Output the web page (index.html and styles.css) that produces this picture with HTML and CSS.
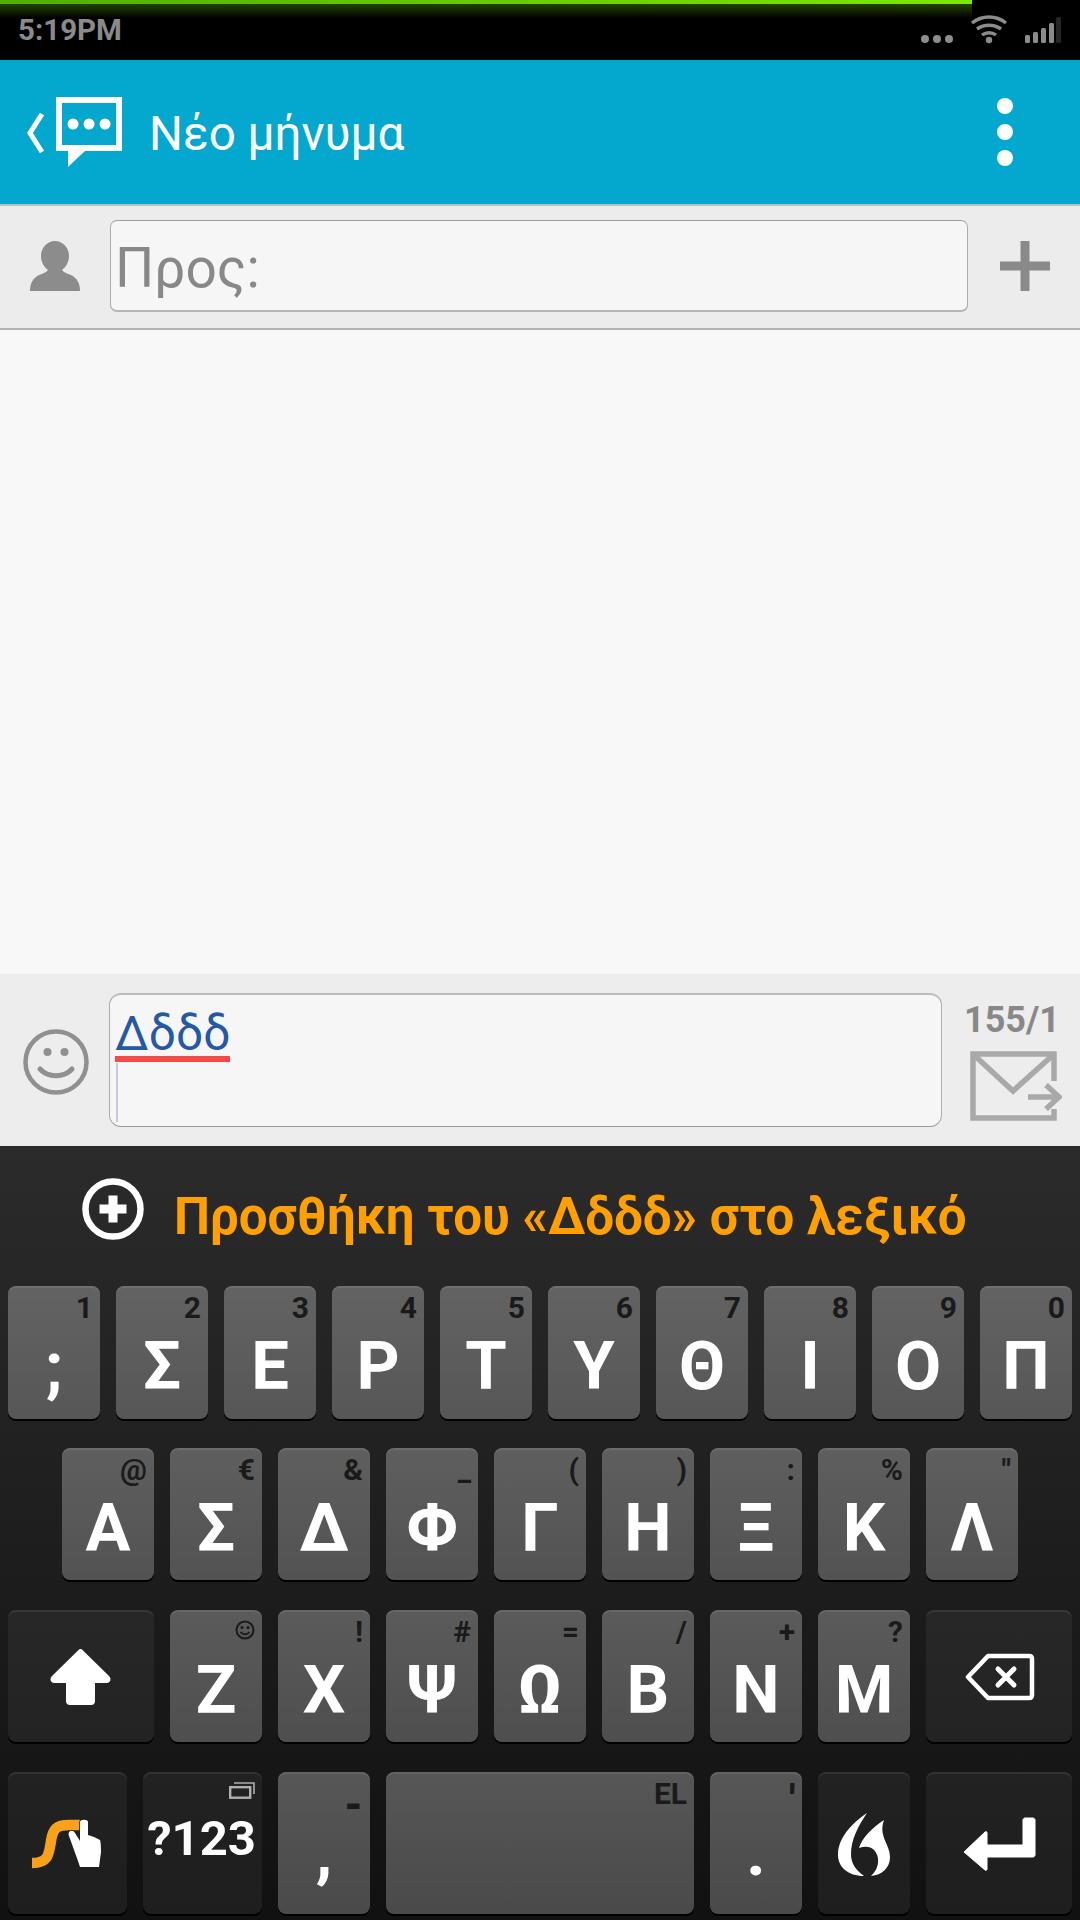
FILE: index.html
```html
<!DOCTYPE html>
<html>
<head>
	<meta charset="utf-8">
	<title>Νέο μήνυμα</title>
	<link rel="stylesheet" href="styles.css">
</head>
<body>
	<div class="pantalla">
		<div class="status">
			<div class="carga"></div>
			<span class="hora">5:19PM</span>
			<svg class="status_iconos" width="150" height="60" viewBox="0 0 150 60">
				<g fill="#8c8c8c">
					<circle cx="5" cy="39" r="4"/><circle cx="17" cy="39" r="4"/><circle cx="29" cy="39" r="4"/>
					<circle cx="69" cy="40" r="3.2"/>
				</g>
				<g fill="none" stroke="#8c8c8c" stroke-width="3.4">
					<path d="M52 23c10-8 24-8 34 0"/><path d="M57 29c7-5 17-5 24 0"/><path d="M62 35c4-3 10-3 14 0"/>
				</g>
				<g fill="#8c8c8c">
					<rect x="105" y="35" width="5" height="8" rx="1.5"/><rect x="113" y="32" width="5" height="11" rx="1.5"/><rect x="121" y="28" width="5" height="15" rx="1.5"/><rect x="129" y="23" width="5" height="20" rx="1.5"/>
					<rect x="136" y="17" width="5" height="26" rx="1.5" fill="#262626"/>
				</g>
			</svg>
		</div>

		<div class="appbar">
			<svg width="95" height="70" viewBox="0 0 95 70">
				<path d="M15 17L3 36l12 19" fill="none" stroke="#fff" stroke-width="5"/>
				<path d="M29 0h66v54H58L41 70V54H29z" fill="#fff"/>
				<rect x="35" y="6" width="54" height="42" fill="#04a7cd"/>
				<circle cx="46" cy="27" r="5.5" fill="#fff"/><circle cx="62" cy="27" r="5.5" fill="#fff"/><circle cx="78" cy="27" r="5.5" fill="#fff"/>
			</svg>
			<span class="titulo">Νέο μήνυμα</span>
			<svg class="overflow" width="16" height="68" viewBox="0 0 16 68">
				<circle cx="8" cy="8" r="8" fill="#fff"/><circle cx="8" cy="34" r="8" fill="#fff"/><circle cx="8" cy="60" r="8" fill="#fff"/>
			</svg>
		</div>

		<div class="para">
			<svg class="persona" width="50" height="50" viewBox="0 0 50 50">
				<path d="M25 0c8 0 14 7 14 15 0 6-3 11-7 14 1 2 4 3 9 5 6 3 9 8 9 16H0c0-8 3-13 9-16 5-2 8-3 9-5-4-3-7-8-7-14C11 7 17 0 25 0z" fill="#8c8c8c"/>
			</svg>
			<div class="campo_para">Προς:</div>
			<svg class="mas" width="50" height="50" viewBox="0 0 50 50">
				<path d="M20.500 0h9v20.500H50v9H29.500V50h-9V29.500H0v-9h20.500z" fill="#8a8a8a"/>
			</svg>
		</div>

		<div class="mensajes"></div>

		<div class="redactar">
			<svg class="carita" width="66" height="66" viewBox="0 0 66 66">
				<circle cx="33" cy="33" r="30.500" fill="none" stroke="#909090" stroke-width="4.500"/>
				<circle cx="24.500" cy="23" r="4" fill="#909090"/><circle cx="41.500" cy="23" r="4" fill="#909090"/>
				<path d="M17 40c8 9 24 9 32 0" fill="none" stroke="#909090" stroke-width="5" stroke-linecap="round"/>
			</svg>
			<div class="campo_texto">
				<div class="palabra">Δδδδ</div>
				<div class="cursor"></div>
			</div>
			<div class="enviar">
				<span class="contador">155/1</span>
				<svg width="92" height="70" viewBox="0 0 92 70">
					<path d="M84 30V3H3v64h81v-9" fill="none" stroke="#a9a9a9" stroke-width="5.500"/>
					<path d="M4 4l39 36L83 4" fill="none" stroke="#a9a9a9" stroke-width="5.500"/>
					<path d="M58 46h31M76 34l13 12-13 12" fill="none" stroke="#a9a9a9" stroke-width="5.500"/>
				</svg>
			</div>
		</div>

		<div class="teclado">
			<div class="sugerencia">
				<svg width="62" height="62" viewBox="0 0 62 62">
					<circle cx="31" cy="31" r="27.500" fill="none" stroke="#fff" stroke-width="6.500"/>
					<path d="M26.500 17.500h9v9h9v9h-9v9h-9v-9h-9v-9h9z" fill="#fff"/>
				</svg>
				<span>Προσθήκη του «Δδδδ» στο λεξικό</span>
			</div>

			<div class="fila f1">
				<div class="tecla"><i>1</i><b>;</b></div>
				<div class="tecla"><i>2</i><b>Σ</b></div>
				<div class="tecla"><i>3</i><b>Ε</b></div>
				<div class="tecla"><i>4</i><b>Ρ</b></div>
				<div class="tecla"><i>5</i><b>Τ</b></div>
				<div class="tecla"><i>6</i><b>Υ</b></div>
				<div class="tecla"><i>7</i><b>Θ</b></div>
				<div class="tecla"><i>8</i><b>Ι</b></div>
				<div class="tecla"><i>9</i><b>Ο</b></div>
				<div class="tecla"><i>0</i><b>Π</b></div>
			</div>

			<div class="fila f2">
				<div class="tecla"><i>@</i><b>Α</b></div>
				<div class="tecla"><i>€</i><b>Σ</b></div>
				<div class="tecla"><i>&amp;</i><b>Δ</b></div>
				<div class="tecla"><i>_</i><b>Φ</b></div>
				<div class="tecla"><i>(</i><b>Γ</b></div>
				<div class="tecla"><i>)</i><b>Η</b></div>
				<div class="tecla"><i>:</i><b>Ξ</b></div>
				<div class="tecla"><i>%</i><b>Κ</b></div>
				<div class="tecla"><i>"</i><b>Λ</b></div>
			</div>

			<div class="fila f3">
				<div class="tecla oscura ancha">
					<svg class="dibujo" viewBox="0 0 146 132">
						<path d="M72.500 39c-1 0-1 0-2 1L44 66c-3 3-1 7 2 7h12v18c0 3 2 4 4 4h21c3 0 4-2 4-4V73h12c3 0 5-4 2-7L74.500 40c-1-1-1-1-2-1z" fill="#fff"/>
					</svg>
				</div>
				<div class="tecla"><svg class="pista" width="20" height="20" viewBox="0 0 20 20"><circle cx="10" cy="10" r="8.500" fill="none" stroke="#1a1a1a" stroke-width="2"/><circle cx="7" cy="7.500" r="1.500" fill="#1a1a1a"/><circle cx="13" cy="7.500" r="1.500" fill="#1a1a1a"/><path d="M5.500 12c2.500 3 6.500 3 9 0" fill="none" stroke="#1a1a1a" stroke-width="1.800"/></svg><b>Ζ</b></div>
				<div class="tecla"><i>!</i><b>Χ</b></div>
				<div class="tecla"><i>#</i><b>Ψ</b></div>
				<div class="tecla"><i>=</i><b>Ω</b></div>
				<div class="tecla"><i>/</i><b>Β</b></div>
				<div class="tecla"><i>+</i><b>Ν</b></div>
				<div class="tecla"><i>?</i><b>Μ</b></div>
				<div class="tecla oscura ancha">
					<svg class="dibujo" viewBox="0 0 146 132">
						<path d="M42 67l20-21h41c2 0 3 1 3 3v36c0 2-1 3-3 3H62z" fill="none" stroke="#fff" stroke-width="4.500" stroke-linejoin="round"/>
						<path d="M72 59l16 16M88 59L72 75" fill="none" stroke="#fff" stroke-width="5" stroke-linecap="round"/>
					</svg>
				</div>
			</div>

			<div class="fila f4">
				<div class="tecla oscura media">
					<svg class="dibujo" viewBox="0 0 119 142">
						<path d="M24 91c16 0 17-8 19-22 2-13 6-16 18-16h11" fill="none" stroke="#f9a11b" stroke-width="10.500"/>
						<path d="M72 50c0-3 8-3 8 0v13l6 2 6 3c1 3 1 10 1 12l-2 15H72l-2-6-9-25c-2-5 4-7 6-3l5 8z" fill="#fff" stroke="#222" stroke-width="1.500" paint-order="stroke"/>
					</svg>
				</div>
				<div class="tecla oscura media numeros">
					<svg class="pista" width="26" height="17" viewBox="0 0 26 17"><path d="M5 1h20v11" fill="none" stroke="#b0b0b0" stroke-width="1.600"/><rect x="1.200" y="5.200" width="20" height="10.500" fill="none" stroke="#b0b0b0" stroke-width="2.400"/></svg>
					<b>?123</b>
				</div>
				<div class="tecla"><i class="raya">-</i><b>,</b></div>
				<div class="tecla espacio"><i>EL</i><b>&nbsp;</b></div>
				<div class="tecla"><i class="comilla">'</i><b>.</b></div>
				<div class="tecla oscura">
					<svg class="dibujo" viewBox="0 0 92 142">
						<path d="M49 41C33 52 20 66 20 83C20 95 30 104 46 104C38 98 33 92 33 82C33 68 40 54 49 41z" fill="#fff"/>
						<path d="M66 48C54 56 44 66 41 76C47 74 52 74 56 78C62 84 62 96 53 104C64 103 72 96 72 85C72 72 60 64 66 48z" fill="#fff"/>
					</svg>
				</div>
				<div class="tecla oscura ancha">
					<svg class="dibujo" viewBox="0 0 146 142">
						<path d="M38 80l21-20c1-1 2 0 2 1v12h36V48c0-1 1-2 2-2h8c1 0 2 1 2 2v35c0 1-1 2-2 2H61v12c0 1-1 2-2 1z" fill="#fff" stroke="#fff" stroke-width="1" stroke-linejoin="round"/>
					</svg>
				</div>
			</div>
		</div>
	</div>
</body>
</html>
```

FILE: styles.css
```css
* {
  box-sizing: border-box;
}

body {
  margin: 0;
  font-family: Roboto, sans-serif;
}

.pantalla {
  width: 1080px;
  height: 1920px;
  overflow: hidden;
  display: flex;
  flex-flow: column;
  background: #f8f8f8;
}

/* barra de estado */
.status {
  position: relative;
  flex: none;
  height: 60px;
  background: #000;
  display: flex;
  align-items: flex-start;
  justify-content: space-between;
}

.carga {
  position: absolute;
  top: 0;
  left: 0;
  width: 972px;
  height: 18px;
  background:
    linear-gradient(to right, #4fae00, #7de800) top / 100% 4px no-repeat,
    linear-gradient(to bottom, rgba(90, 170, 0, .4), rgba(90, 170, 0, 0)) 0 4px / 100% 14px no-repeat;
}

.hora {
  position: relative;
  margin: 13px 0 0 18px;
  font-size: 29.500px;
  line-height: 34px;
  font-weight: 700;
  color: #8a8a8a;
}

.status_iconos {
  position: relative;
  margin-right: 10px;
  flex: none;
}

/* barra azul */
.appbar {
  flex: none;
  height: 146px;
  padding-left: 27px;
  background: #04a7cd;
  border-bottom: 2px solid #bdbdbd;
  display: flex;
  align-items: center;
}

.titulo {
  margin-left: 27px;
  padding-top: 3px;
  font-size: 47.600px;
  color: #fff;
}

.overflow {
  margin-left: auto;
  margin-right: 67px;
}

/* destinatario */
.para {
  flex: none;
  height: 124px;
  padding: 14px 0 16px 30px;
  background: #ececec;
  border-bottom: 2px solid #b5b5b5;
  display: flex;
  align-items: center;
}

.campo_para {
  width: 858px;
  height: 92px;
  margin-left: 30px;
  padding-left: 4px;
  border: 1.500px solid #ababab;
  border-top-color: #a0a0a0;
  border-bottom: 2px solid #b5b5b5;
  border-radius: 7px;
  background: #f6f6f6;
  font-size: 55px;
  line-height: 94px;
  color: #888;
}

.mas {
  margin-left: 32px;
}

.mensajes {
  flex: none;
  height: 644px;
  background: #f8f8f8;
}

/* redactar */
.redactar {
  flex: none;
  height: 172px;
  padding-left: 23px;
  background: #ededed;
  display: flex;
  align-items: flex-start;
}

.carita {
  margin-top: 55px;
}

.campo_texto {
  width: 833px;
  height: 134px;
  margin: 19px 0 0 20px;
  padding: 0 0 0 5px;
  border: 1.500px solid #adadad;
  border-top: 2px solid #bdbdbd;
  border-bottom-color: #999;
  border-radius: 12px;
  background: #f6f6f6;
}

.palabra {
  width: fit-content;
  height: 67px;
  border-bottom: 6px solid #f44a4a;
  font-size: 48px;
  line-height: 77px;
  color: #2558a5;
}

.cursor {
  width: 1.500px;
  height: 59px;
  margin: 1px 0 0 1px;
  background: #c5cbdc;
}

.enviar {
  margin-left: 28px;
  padding-top: 26px;
  display: flex;
  flex-flow: column;
  align-items: flex-start;
}

.contador {
  font-size: 36px;
  line-height: 40px;
  font-weight: 700;
  color: #888;
  margin-left: -6px;
}

.enviar svg {
  margin-top: 11px;
}

/* teclado */
.teclado {
  flex: 1;
  background: linear-gradient(to bottom, #2b2b2b, #111);
  display: flex;
  flex-flow: column;
}

.sugerencia {
  height: 140px;
  padding-left: 82px;
  display: flex;
  align-items: center;
  font-size: 51px;
  font-weight: 700;
  color: #ffa000;
}

.sugerencia svg {
  margin-bottom: 15px;
}

.sugerencia span {
  margin-left: 30px;
}

.fila {
  display: flex;
  justify-content: center;
  gap: 16px;
}

.f1 { height: 133px; }
.f2 { height: 132px; margin-top: 29px; }
.f3 { height: 132px; margin-top: 30px; }
.f4 { height: 142px; margin-top: 30px; }

.tecla {
  width: 92px;
  padding-right: 7px;
  border-radius: 8px;
  background: linear-gradient(to bottom, rgba(255, 255, 255, .28), rgba(255, 255, 255, .24));
  box-shadow: inset 0 2px 0 rgba(255, 255, 255, .08), 0 2px 0 #000;
  display: flex;
  flex-flow: column;
  align-items: flex-end;
}

.tecla i {
  height: 30px;
  margin-top: 7px;
  font-style: normal;
  font-size: 30px;
  line-height: 30px;
  font-weight: 700;
  color: #1a1a1a;
}

.tecla b {
  align-self: center;
  margin: 10px -7px 0 0;
  font-size: 67px;
  line-height: 67px;
  font-weight: 700;
  color: #fff;
}

.pista {
  margin-top: 10px;
  margin-bottom: 7px;
}

.oscura {
  padding: 0;
  background: rgba(255, 255, 255, .055);
}

.ancha { width: 146px; }
.media { width: 119px; }
.espacio { width: 308px; }

.dibujo {
  width: 100%;
  height: 100%;
}

.numeros {
  padding-right: 7px;
}

.tecla.numeros b {
  margin: 15px -5px 0 0;
  font-size: 49px;
  line-height: 49px;
}

.numeros .pista {
  margin-bottom: 0;
}

.tecla .raya {
  margin-top: 18px;
  font-size: 42px;
  font-weight: 900;
}

.tecla .raya + b {
  margin-top: -1px;
}

.tecla .comilla {
  margin-top: 12px;
  font-size: 38px;
  font-weight: 900;
}

.tecla .comilla + b {
  margin-top: 5px;
}
```
